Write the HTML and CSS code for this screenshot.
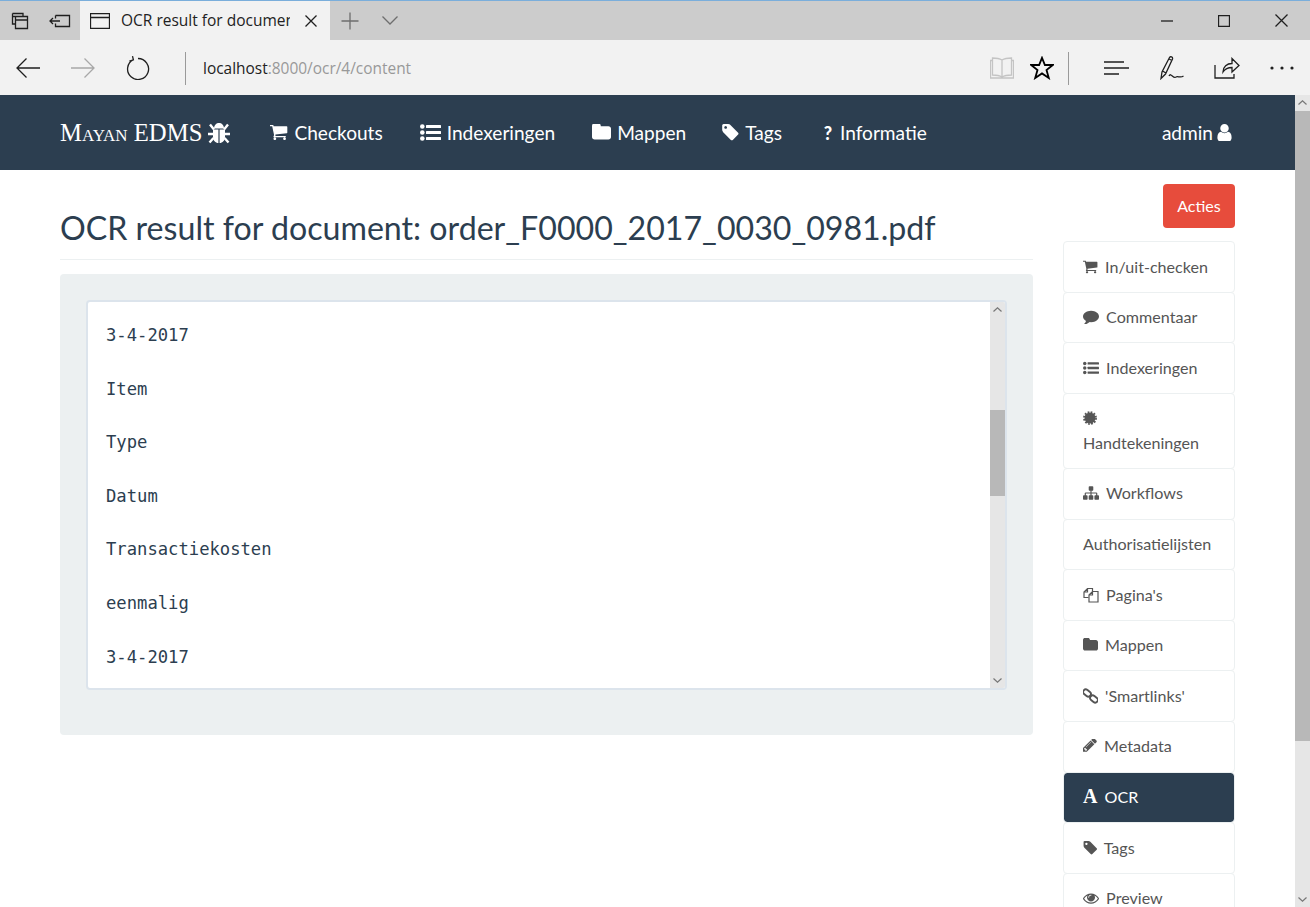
FILE: index.html
```html
<!DOCTYPE html>
<html lang="nl">
<head>
<meta charset="utf-8">
<title>OCR result for document</title>
<link rel="stylesheet" href="styles.css">
</head>
<body>
<svg class="sprite" aria-hidden="true">
  <symbol id="i-cart" viewBox="64 256 1664 1408"><path d="M640 1536q0 52-38 90t-90 38-90-38-38-90 38-90 90-38 90 38 38 90zm896 0q0 52-38 90t-90 38-90-38-38-90 38-90 90-38 90 38 38 90zm128-1088v512q0 24-16.500 42.500t-40.500 21.500l-1044 122q13 60 13 70 0 16-24 64h920q26 0 45 19t19 45-19 45-45 19h-1024q-26 0-45-19t-19-45q0-11 8-31.500t16-36 21.500-40 15.500-29.500l-177-823h-204q-26 0-45-19t-19-45 19-45 45-19h256q16 0 28.500 6.500t19.500 15.500 13 24.500 8 26 5.500 29.500 4.500 26h1201q26 0 45 19t19 45z"/></symbol>
  <symbol id="i-list" viewBox="0 0 21 17"><circle cx="2.300" cy="2.500" r="2.300"/><circle cx="2.300" cy="8.500" r="2.300"/><circle cx="2.300" cy="14.500" r="2.300"/><rect x="6" y="1" width="15" height="3" rx=".5"/><rect x="6" y="7" width="15" height="3" rx=".5"/><rect x="6" y="13" width="15" height="3" rx=".5"/></symbol>
  <symbol id="i-folder" viewBox="64 256 1664 1344"><path d="M1728 608v704q0 92-66 158t-158 66h-1216q-92 0-158-66t-66-158v-960q0-92 66-158t158-66h320q92 0 158 66t66 158v32h672q92 0 158 66t66 158z"/></symbol>
  <symbol id="i-tag" viewBox="64 128 1579 1579"><path d="M576 448q0-53-37.500-90.500t-90.500-37.500-90.500 37.500-37.500 90.500 37.500 90.500 90.500 37.500 90.500-37.500 37.500-90.500zm1067 576q0 53-37 90l-491 492q-39 37-91 37-53 0-90-37l-715-716q-38-37-64.500-101t-26.500-117v-416q0-52 38-90t90-38h416q53 0 117 26.500t102 64.500l715 714q37 39 37 91z"/></symbol>
  <symbol id="i-user" viewBox="256 128 1280 1536"><path d="M1536 1399q0 109-62.500 187t-150.500 78h-854q-88 0-150.500-78t-62.500-187q0-85 8.500-160.500t31.500-152 58.500-131 94-89 134.500-34.500q131 128 313 128t313-128q76 0 134.500 34.500t94 89 58.500 131 31.500 152 8.500 160.500zm-256-887q0 159-112.500 271.500t-271.500 112.500-271.500-112.500-112.500-271.500 112.500-271.500 271.500-112.500 271.500 112.500 112.500 271.500z"/></symbol>
  <symbol id="i-comment" viewBox="0 256 1792 1400"><path d="M1792 896q0 174-120 321.500t-326 233-450 85.500q-70 0-145-8-198 175-460 242-49 14-114 22-17 2-30.500-9t-17.500-29v-1q-3-4-.5-12t2-10 4.500-9.500l6-9 7-8.500 8-9q7-8 31-34.500t34.500-38 31-39.500 32.500-51 27-59 26-76q-157-89-247.500-220t-90.500-281q0-130 71-248.500t191-204.500 286-136.500 348-50.500q244 0 450 85.500t326 233 120 321.500z"/></symbol>
  <symbol id="i-cert" viewBox="0 0 16 16"><circle cx="8" cy="8" r="6.300"/><circle cx="8" cy="8" r="6.900" fill="none" stroke="currentColor" stroke-width="2" stroke-dasharray="2 1.610"/></symbol>
  <symbol id="i-sitemap" viewBox="0 128 1792 1536"><path d="M1792 1248v320q0 40-28 68t-68 28h-320q-40 0-68-28t-28-68v-320q0-40 28-68t68-28h96v-192h-512v192h96q40 0 68 28t28 68v320q0 40-28 68t-68 28h-320q-40 0-68-28t-28-68v-320q0-40 28-68t68-28h96v-192h-512v192h96q40 0 68 28t28 68v320q0 40-28 68t-68 28h-320q-40 0-68-28t-28-68v-320q0-40 28-68t68-28h96v-192q0-52 38-90t90-38h512v-192h-96q-40 0-68-28t-28-68v-320q0-40 28-68t68-28h320q40 0 68 28t28 68v320q0 40-28 68t-68 28h-96v192h512q52 0 90 38t38 90v192h96q40 0 68 28t28 68z"/></symbol>
  <symbol id="i-files" viewBox="0 0 16 16"><path d="M5.500 10.500H1V5L4.500 1.500H9.500V4M1 5H4.500V1.500" fill="none" stroke="currentColor" stroke-width="1.200"/><path d="M6 8L9.500 4.500H15V15H6ZM6 8H9.500V4.500" fill="none" stroke="currentColor" stroke-width="1.200"/></symbol>
  <symbol id="i-link" viewBox="0 0 16 16"><g fill="none" stroke="currentColor" stroke-width="2"><rect x="-.2" y="2" width="9" height="5.600" rx="2.800" transform="rotate(40 4.300 4.800)"/><rect x="7.200" y="8.400" width="9" height="5.600" rx="2.800" transform="rotate(40 11.700 11.200)"/></g></symbol>
  <symbol id="i-pencil" viewBox="128 256 1536 1536"><path d="M491 1536l91-91-235-235-91 91v107h128v128h107zm523-928q0-22-22-22-10 0-17 7l-542 542q-7 7-7 17 0 22 22 22 10 0 17-7l542-542q7-7 7-17zm-54-192l416 416-832 832h-416v-416zm683 96q0 53-37 90l-166 166-416-416 166-165q36-38 90-38 53 0 91 38l235 234q37 39 37 91z"/></symbol>
  <symbol id="i-eye" viewBox="0 384 1792 1024"><path d="M1664 960q-152-236-381-353 61 104 61 225 0 185-131.500 316.500t-316.500 131.500-316.500-131.500-131.500-316.500q0-121 61-225-229 117-381 353 133 205 333.500 326.500t434.500 121.500 434.500-121.500 333.500-326.500zm-720-384q0-20-14-34t-34-14q-125 0-214.500 89.500t-89.500 214.500q0 20 14 34t34 14 34-14 14-34q0-86 61-147t147-61q20 0 34-14t14-34zm848 384q0 34-20 69-140 230-376.500 368.500t-499.500 138.500-499.500-139-376.500-368q-20-35-20-69t20-69q140-229 376.500-368t499.500-139 499.500 139 376.500 368q20 35 20 69z"/></symbol>
  <symbol id="i-bug" viewBox="0 0 22 22"><path d="M6 6.500C6 3 8.500 1 11 1s5 2 5 5.500Z"/><path d="M5 7.500h5.400V21C7.500 21 5 18.500 5 15Zm6.600 0H17V15c0 3.500-2.500 6-5.400 6Z"/><path d="M2 2.500l4 5M20 2.500l-4 5M0 12h5M22 12h-5M1.500 20.500l4-4.500M20.500 20.500l-4-4.500" fill="none" stroke="currentColor" stroke-width="2.400"/></symbol>
</svg>

<header class="chrome">
  <div class="tabstrip">
    <span class="slot slot-40"><svg class="ci" width="18" height="18" viewBox="0 0 18 18"><path d="M1.500 1.500H12V4M1.500 1.500V12H4M4.500 4.500H16.500V16.500H4.500ZM4.500 8H16.500M1.500 4.500H12"/></svg></span>
    <span class="slot slot-40"><svg class="ci" width="22" height="14" viewBox="0 0 22 14"><path d="M6.500 1.500H20.500V12.500H6.500V9.500M6.500 1.500V4.500M1 7H11M4 4L1 7L4 10"/></svg></span>
    <div class="tab">
      <svg class="ci" width="20" height="16" viewBox="0 0 20 16"><path d="M.5 .5H19.500V15.500H.5ZM.5 4.500H19.500"/></svg>
      <span class="tab-title">OCR result for document: order_F0000_2017_0030_0981.pdf</span>
      <svg class="ci" width="12" height="12" viewBox="0 0 12 12"><path d="M.5 .5L11.500 11.500M11.500 .5L.5 11.500"/></svg>
    </div>
    <span class="slot slot-40"><svg class="ci faint" width="18" height="18" viewBox="0 0 18 18"><path d="M9 .5V17.500M.5 9H17.500"/></svg></span>
    <span class="slot slot-40"><svg class="ci faint" width="16" height="9" viewBox="0 0 16 9"><path d="M.5 .5L8 8L15.500 .5"/></svg></span>
    <span class="spacer"></span>
    <span class="slot slot-57"><svg class="ci" width="12" height="2" viewBox="0 0 12 2"><path d="M0 1H12"/></svg></span>
    <span class="slot slot-57"><svg class="ci" width="12" height="12" viewBox="0 0 12 12"><path d="M.5 .5H11.500V11.500H.5Z"/></svg></span>
    <span class="slot slot-58"><svg class="ci" width="13" height="13" viewBox="0 0 13 13"><path d="M.5 .5L12.500 12.500M12.500 .5L.5 12.500"/></svg></span>
  </div>
  <div class="toolbar">
    <span class="slot slot-55"><svg class="ci" width="24" height="20" viewBox="0 0 24 20"><path d="M24 10H1M10.500 .5L1 10L10.500 19.500"/></svg></span>
    <span class="slot slot-55"><svg class="ci off" width="24" height="20" viewBox="0 0 24 20"><path d="M0 10H23M13.500 .5L23 10L13.500 19.500"/></svg></span>
    <span class="slot slot-55"><svg class="ci" width="24" height="24" viewBox="0 0 24 24"><path d="M7.400 3.600A10.500 10.500 0 1 0 12 2.500M6.500 .2L7.400 3.800L3.400 5.200"/></svg></span>
    <span class="divider first"></span>
    <div class="url"><span class="host">localhost</span>:8000/ocr/4/content</div>
    <span class="slot slot-40"><svg class="ci book" width="24" height="22" viewBox="0 0 24 22"><path d="M12 3C9.500 1.500 6 1 2.500 1V18C6 18 9.500 18.500 12 20C14.500 18.500 18 18 21.500 18V1C18 1 14.500 1.500 12 3ZM12 3V20M2.500 3.500H.5V21H23.500V3.500H21.500"/></svg></span>
    <span class="slot slot-40"><svg class="ci strong" width="24" height="24" viewBox="0 0 24 24"><path d="M12 1.800L14.900 9H22.800L16.500 14L18.800 22L12 17.400L5.200 22L7.500 14L1.200 9H9.100Z"/></svg></span>
    <span class="divider second"></span>
    <span class="slot slot-55"><svg class="ci" width="26" height="14" viewBox="0 0 26 14"><path d="M0 1H20M0 7H25M0 13H15"/></svg></span>
    <span class="slot slot-55"><svg class="ci" width="24" height="24" viewBox="0 0 24 24"><path d="M1 22.500L2 16L9.500 1.500C10.500 0 13 1 12.500 3L5.500 18L1 22.500ZM2.500 15L6 17M9 3L12 4.500M9 20C11 16 13 23 16 21C18 19.500 20 22.500 23.500 20"/></svg></span>
    <span class="slot slot-55"><svg class="ci" width="26" height="22" viewBox="0 0 26 22"><path d="M1 8V21H20V17M9 15C9 9.500 13 6.500 18 6.500V1.500L25 8.500L18 15V10.500C14 10.500 11 12 9 15Z"/></svg></span>
    <span class="slot slot-55 last"><svg class="dots" width="24" height="4" viewBox="0 0 24 4"><circle cx="2" cy="2" r="1.600"/><circle cx="12" cy="2" r="1.600"/><circle cx="22" cy="2" r="1.600"/></svg></span>
  </div>
</header>

<div class="viewport">
  <div class="page">
    <nav class="navbar">
      <a class="brand">Mayan EDMS<svg class="brand-bug"><use href="#i-bug"/></svg></a>
      <ul class="nav-links">
        <li><svg class="ni ni-18"><use href="#i-cart"/></svg>Checkouts</li>
        <li><svg class="ni ni-21"><use href="#i-list"/></svg>Indexeringen</li>
        <li><svg class="ni ni-19"><use href="#i-folder"/></svg>Mappen</li>
        <li class="tags"><svg class="ni ni-18"><use href="#i-tag"/></svg>Tags</li>
        <li class="info"><span class="qmark">?</span>Informatie</li>
      </ul>
      <div class="account">admin<svg class="ni-user"><use href="#i-user"/></svg></div>
    </nav>

    <div class="content">
      <main class="main">
        <h1 class="title">OCR result for document: order_F0000_2017_0030_0981.pdf</h1>
        <section class="well">
          <div class="textbox">
<pre class="ocr">3-4-2017

Item

Type

Datum

Transactiekosten

eenmalig

3-4-2017</pre>
            <div class="vbar">
              <span class="arrow"><svg width="9" height="5" viewBox="0 0 9 5"><path d="M.5 4.500L4.500 .8L8.500 4.500"/></svg></span>
              <span class="vthumb"></span>
              <span class="arrow bottom"><svg width="9" height="5" viewBox="0 0 9 5"><path d="M.5 .5L4.500 4.200L8.500 .5"/></svg></span>
            </div>
          </div>
        </section>
      </main>

      <aside class="side">
        <button class="btn-actions">Acties</button>
        <ul class="menu">
          <li><svg class="mi w15"><use href="#i-cart"/></svg> In/uit-checken</li>
          <li><svg class="mi w16"><use href="#i-comment"/></svg> Commentaar</li>
          <li><svg class="mi w16"><use href="#i-list"/></svg> Indexeringen</li>
          <li><svg class="mi w14"><use href="#i-cert"/></svg> Handtekeningen</li>
          <li><svg class="mi w16"><use href="#i-sitemap"/></svg> Workflows</li>
          <li>Authorisatielijsten</li>
          <li><svg class="mi w16 tall"><use href="#i-files"/></svg> Pagina's</li>
          <li><svg class="mi w15"><use href="#i-folder"/></svg> Mappen</li>
          <li><svg class="mi w15 tall"><use href="#i-link"/></svg> 'Smartlinks'</li>
          <li><svg class="mi w14"><use href="#i-pencil"/></svg> Metadata</li>
          <li class="active"><span class="glyph-a">A</span> OCR</li>
          <li><svg class="mi w14"><use href="#i-tag"/></svg> Tags</li>
          <li><svg class="mi w16"><use href="#i-eye"/></svg> Preview</li>
        </ul>
      </aside>
    </div>
  </div>

  <div class="pagebar">
    <span class="arrow"><svg width="9" height="5" viewBox="0 0 9 5"><path d="M.5 4.500L4.500 .8L8.500 4.500"/></svg></span>
    <span class="pagethumb"></span>
    <span class="arrow bottom"><svg width="9" height="5" viewBox="0 0 9 5"><path d="M.5 .5L4.500 4.200L8.500 .5"/></svg></span>
  </div>
</div>
</body>
</html>
```
FILE: styles.css
```css
* { box-sizing: border-box; }
html, body { margin: 0; height: 100%; overflow: hidden; }
body { display: flex; flex-direction: column; font-family: Lato, "Liberation Sans", sans-serif; color: #2c3e50; background: #fff; }
.sprite { width: 0; height: 0; position: absolute; }
ul { list-style: none; margin: 0; padding: 0; }

/* Browser chrome */
.chrome { flex: none; font-family: "Open Sans", "Noto Sans", sans-serif; }
.tabstrip { height: 40px; background: #cccccc; border-top: 1px solid #7aaedb; display: flex; align-items: stretch; }
.toolbar { height: 55px; background: #f2f2f2; display: flex; align-items: center; padding-top: 1px; }
.slot { flex: none; display: flex; align-items: center; justify-content: center; }
.slot-40 { width: 40px; }
.slot-55 { width: 55px; }
.slot-57 { width: 57px; }
.slot-58 { width: 58px; }
.slot-55.last { margin-right: 1px; }
.spacer { flex: 1; }
.ci { fill: none; stroke: #1f1f1f; stroke-width: 1.300; }
.ci.faint { stroke: #6e6e6e; }
.ci.off { stroke: #a8a8a8; }
.ci.book { stroke: #c4c4c4; }
.ci.strong { stroke: #000; stroke-width: 1.800; }
.dots { fill: #222; }
.tab { width: 250px; background: #f2f2f2; display: flex; align-items: center; padding: 0 13px 0 10px; }
.tab-title { flex: 1; margin: 0 15px 2px 11px; font-size: 15.500px; color: #222; white-space: nowrap; overflow: hidden; }
.divider { flex: none; width: 1px; height: 33px; background: #9a9a9a; }
.divider.first { margin-left: 20px; }
.divider.second { margin: 0 20px 0 6px; }
.url { flex: 1; margin-left: 17px; font-size: 15.450px; color: #999; white-space: nowrap; }
.host { color: #222; }

/* Page viewport */
.viewport { flex: 1; min-height: 0; display: flex; }
.page { flex: 1; min-width: 0; overflow: hidden; }
.pagebar { flex: none; width: 15px; background: #e6e6e6; display: flex; flex-direction: column; }
.pagethumb { flex: none; height: 630px; background: #b8b8b8; margin-top: 1px; }
.arrow { flex: none; height: 15px; display: flex; align-items: center; justify-content: center; }
.arrow.bottom { margin-top: auto; }
.arrow svg { fill: none; stroke: #777; stroke-width: 1.200; }

/* Navbar */
.navbar { height: 75px; background: #2c3e50; color: #fff; display: flex; align-items: center; padding: 0 63px 0 60px; font-size: 19.100px; }
.brand { font-family: "Liberation Serif", serif; font-variant: small-caps; font-size: 24.700px; display: flex; align-items: center; margin-right: 40px; }
.brand-bug { width: 22px; height: 22px; margin-left: 6px; fill: currentColor; color: #fff; }
.nav-links { display: flex; gap: 37px; flex: 1; }
.nav-links li { display: flex; align-items: center; white-space: nowrap; }
.ni { height: 17px; margin-right: 6px; fill: currentColor; flex: none; }
.ni-18 { width: 18px; }
.ni-19 { width: 19px; }
.ni-21 { width: 21px; }
.nav-links .tags { margin-left: -2px; }
.nav-links .info { margin-left: 4px; }
.qmark { font-weight: 900; width: 10px; margin-right: 7px; font-size: 18px; text-align: center; }
.account { display: flex; align-items: center; }
.ni-user { width: 15px; height: 17px; margin-left: 4px; fill: currentColor; }

/* Content */
.content { display: flex; align-items: flex-start; padding: 14px 60px 0; gap: 30px; }
.main { flex: none; width: 973px; }
.title { margin: 26px 0 0; padding-bottom: 13px; border-bottom: 1px solid #ecf0f1; font-weight: 400; font-size: 32.150px; line-height: 36px; }
.well { margin-top: 14px; height: 461px; padding: 26px; background: #ecf0f1; border-radius: 4px; }
.textbox { height: 390px; border: 2px solid #dce4ec; border-radius: 4px; background: #fff; display: flex; overflow: hidden; }
.ocr { flex: 1; margin: 0; padding: 20px 18px 0; font-family: "DejaVu Sans Mono", "Liberation Mono", monospace; font-size: 17.200px; line-height: 26.800px; color: #2c3e50; overflow: hidden; }
.vbar { flex: none; width: 15px; background: #e6e6e6; display: flex; flex-direction: column; }
.vthumb { flex: none; height: 86px; margin-top: 93px; background: #b8b8b8; }

/* Side menu */
.side { flex: none; width: 172px; display: flex; flex-direction: column; align-items: flex-end; }
.btn-actions { width: 72px; height: 44px; padding: 0 0 2px; border: 0; border-radius: 4px; background: #e74c3c; color: #fff; font: 400 16px Lato, sans-serif; }
.menu { width: 100%; margin-top: 13px; font-size: 16.100px; line-height: 24.600px; color: #555; }
.menu li { padding: 12.500px 19px; margin-bottom: -1px; border: 1px solid #ecf0f1; background: #fff; border-radius: 4px; }
.menu li.active { background: #2c3e50; background-clip: padding-box; color: #fff; position: relative; }
.mi { height: 14px; fill: currentColor; vertical-align: -1px; margin-right: 3px; }
.mi.tall { height: 16px; vertical-align: -2px; }
.w14 { width: 14px; }
.w15 { width: 15px; }
.w16 { width: 16px; }
.glyph-a { font: 700 20px/1 "Liberation Serif", serif; margin-right: 3px; }
```
